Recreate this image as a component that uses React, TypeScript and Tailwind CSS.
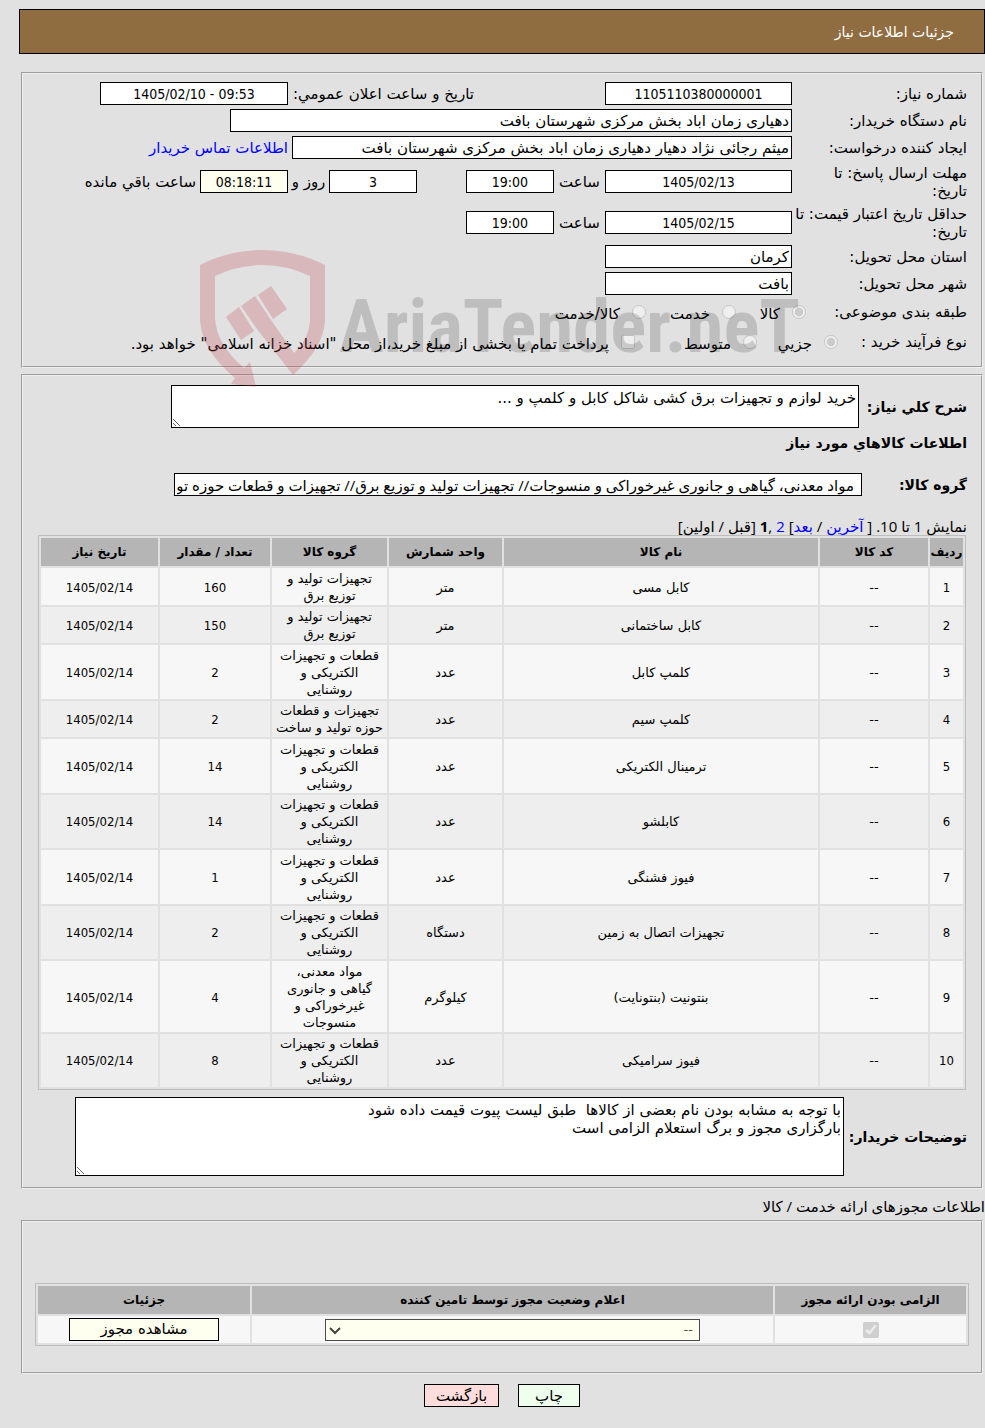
import React from 'react';

const items = [
  { name: 'کابل مسی', unit: 'متر', group: 'تجهیزات تولید و\nتوزیع برق', qty: 160 },
  { name: 'کابل ساختمانی', unit: 'متر', group: 'تجهیزات تولید و\nتوزیع برق', qty: 150 },
  { name: 'کلمپ کابل', unit: 'عدد', group: 'قطعات و تجهیزات\nالکتریکی و\nروشنایی', qty: 2 },
  { name: 'کلمپ سیم', unit: 'عدد', group: 'تجهیزات و قطعات\nحوزه تولید و ساخت', qty: 2 },
  { name: 'ترمینال الکتریکی', unit: 'عدد', group: 'قطعات و تجهیزات\nالکتریکی و\nروشنایی', qty: 14 },
  { name: 'کابلشو', unit: 'عدد', group: 'قطعات و تجهیزات\nالکتریکی و\nروشنایی', qty: 14 },
  { name: 'فیوز فشنگی', unit: 'عدد', group: 'قطعات و تجهیزات\nالکتریکی و\nروشنایی', qty: 1 },
  { name: 'تجهیزات اتصال به زمین', unit: 'دستگاه', group: 'قطعات و تجهیزات\nالکتریکی و\nروشنایی', qty: 2 },
  { name: 'بنتونیت (بنتونایت)', unit: 'کیلوگرم', group: 'مواد معدنی،\nگیاهی و جانوری\nغیرخوراکی و\nمنسوجات', qty: 4 },
  { name: 'فیوز سرامیکی', unit: 'عدد', group: 'قطعات و تجهیزات\nالکتریکی و\nروشنایی', qty: 8 },
];

const panel = 'mx-0.5 min-w-0 border-2 border-[#f0f0f0] [border-style:groove]';
const box = 'h-[23px] shrink-0 border border-black bg-white px-0.5';
const numBox = "h-[23px] shrink-0 border border-black text-center text-[14px] font-['DejaVu_Sans_Condensed','DejaVu_Sans',sans-serif]";
const table = 'w-full table-fixed border-separate border-spacing-0.5 border border-[#bdbdbd] text-center text-[13px] leading-[17px]';

type RowProps = { id: string; label: string; tall?: boolean; children: React.ReactNode };

function Row({ id, label, tall, children }: RowProps) {
  return (
    <div className={tall ? 'flex h-[41px] items-center' : 'flex h-[27px] items-center'}>
      <label htmlFor={id} className="w-[175px] shrink-0 whitespace-pre">{label}</label>
      {children}
    </div>
  );
}

function Watermark() {
  return (
    <div dir="ltr" className="pointer-events-none absolute top-[250px] right-0 left-[19px] flex justify-center pr-1.5">
      <svg width="598" height="138" viewBox="0 0 598 138" className="overflow-visible" aria-hidden="true">
        <g fill="#bf4048" opacity="0.25">
          <path d="M0 15Q30 0 62 0Q95 0 125 15V70Q124 97 93 125L57 79L41 56L55 46L71 70L94 103Q110 88 110 68V26Q87 15 62 15Q38 15 15 26V68Q16 94 44 118L50 112L56 137L31 134L35 128Q2 101 0 70Z" />
          <path d="M26 67L39 57L54 81L41 90ZM58 45L71 36L87 59L73 69Z" />
        </g>
        <text x="139" y="102" fontSize="75" fill="#000" opacity="0.15" className="font-['Liberation_Sans_Narrow','Roboto_Condensed','Liberation_Sans',sans-serif] font-bold">
          AriaTender.neT
        </text>
      </svg>
    </div>
  );
}

export default function App() {
  return (
    <div
      dir="rtl"
      className="relative min-h-screen bg-[#e1e1e1] pt-[9px] pl-[19px] font-['DejaVu_Sans',sans-serif] text-[15px] leading-[18px] text-black"
    >
      <h1 className="flex h-[45px] items-center border border-black bg-[#8f6d40] px-[30px] text-[14px] text-white">جزئیات اطلاعات نیاز</h1>

      {/* General info */}
      <fieldset className={`${panel} mt-[18px] px-3.5 pt-1.5 pb-[9px]`}>
        <Row id="need-no" label="شماره نیاز:">
          <input id="need-no" readOnly className={`${numBox} w-[187px] bg-white`} value="1105110380000001" />
          <label htmlFor="announce" className="ms-[131px] w-[186px] shrink-0">تاریخ و ساعت اعلان عمومي:</label>
          <input id="announce" readOnly dir="ltr" className={`${numBox} w-[188px] bg-white`} value="1405/02/10 - 09:53" />
        </Row>
        <Row id="org" label="نام دستگاه خریدار:">
          <input id="org" readOnly className={`${box} w-[562px]`} value="دهیاری زمان اباد بخش مرکزی شهرستان بافت" />
        </Row>
        <Row id="creator" label="ایجاد کننده درخواست:">
          <input id="creator" readOnly className={`${box} w-[500px]`} value="میثم رجائی نژاد دهیار دهیاری زمان اباد بخش مرکزی شهرستان بافت" />
          <a href="#contact" className="ms-1 text-[#0000ff]">اطلاعات تماس خریدار</a>
        </Row>
        <Row id="deadline" tall label={'مهلت ارسال پاسخ: تا\nتاریخ:'}>
          <input id="deadline" readOnly className={`${numBox} w-[187px] bg-white`} value="1405/02/13" />
          <label htmlFor="deadline-time" className="w-[51px] text-center">ساعت</label>
          <input id="deadline-time" readOnly className={`${numBox} w-[88px] bg-white`} value="19:00" />
          <input id="days" readOnly className={`${numBox} ms-[49px] w-[88px] bg-white`} value="3" />
          <label htmlFor="days" className="w-[41px] text-center">روز و</label>
          <input id="hours" readOnly className={`${numBox} w-[88px] bg-[#fffff0]`} value="08:18:11" />
          <label htmlFor="hours" className="ms-1">ساعت باقي مانده</label>
        </Row>
        <Row id="validity" tall label={'حداقل تاریخ اعتبار قیمت: تا\nتاریخ:'}>
          <input id="validity" readOnly className={`${numBox} w-[187px] bg-white`} value="1405/02/15" />
          <label htmlFor="validity-time" className="w-[51px] text-center">ساعت</label>
          <input id="validity-time" readOnly className={`${numBox} w-[88px] bg-white`} value="19:00" />
        </Row>
        <Row id="province" label="استان محل تحویل:">
          <input id="province" readOnly className={`${box} w-[187px]`} value="کرمان" />
        </Row>
        <Row id="city" label="شهر محل تحویل:">
          <input id="city" readOnly className={`${box} w-[187px]`} value="بافت" />
        </Row>

        <div className="flex h-[30px] items-center">
          <span className="w-[161px]">طبقه بندی موضوعی:</span>
          <label className="flex w-[70px] items-center gap-3">
            <input type="radio" name="kind" disabled defaultChecked className="size-3.5" />
            <span className="pt-1">کالا</span>
          </label>
          <label className="flex w-[90px] items-center gap-3">
            <input type="radio" name="kind" disabled className="size-3.5" />
            <span className="pt-1">خدمت</span>
          </label>
          <label className="flex items-center gap-3">
            <input type="radio" name="kind" disabled className="size-3.5" />
            <span className="pt-1">کالا/خدمت</span>
          </label>
        </div>
        <div className="flex h-[30px] items-center">
          <span className="w-[129px]">نوع فرآیند خرید :</span>
          <label className="flex w-[81px] items-center gap-3">
            <input type="radio" name="process" disabled defaultChecked className="size-3.5" />
            <span className="pt-1">جزیي</span>
          </label>
          <label className="flex w-[122px] items-center gap-3">
            <input type="radio" name="process" disabled className="size-3.5" />
            <span className="pt-1">متوسط</span>
          </label>
          <label className="flex items-center gap-3">
            <input type="checkbox" disabled className="size-3.5" />
            <span className="pt-1">پرداخت تمام یا بخشی از مبلغ خرید،از محل "اسناد خزانه اسلامی" خواهد بود.</span>
          </label>
        </div>
      </fieldset>

      {/* Items */}
      <fieldset className={`${panel} mt-1.5 px-3.5 pt-[9px] pb-[11px]`}>
        <div className="flex items-center">
          <label htmlFor="summary" className="w-[108px] text-[14px] font-bold">شرح کلي نیاز:</label>
          <textarea id="summary" readOnly className="h-[43px] w-[688px] border border-black bg-white px-0.5 py-[3px]" value="خرید لوازم و تجهیزات برق کشی شاکل کابل و کلمپ و ..." />
        </div>
        <h2 className="mt-1.5 text-[14px] font-bold">اطلاعات کالاهاي مورد نیاز</h2>
        <div className="mt-[21px] flex items-center">
          <label htmlFor="group" className="w-[105px] text-[14px] font-bold">گروه کالا:</label>
          <input
            id="group"
            readOnly
            className="h-[23px] w-[688px] border border-black bg-white ps-[7px] pe-0.5 font-['Open_Sans','DejaVu_Sans',sans-serif]"
            value="مواد معدنی، گیاهی و جانوری غیرخوراکی و منسوجات// تجهیزات تولید و توزیع برق// تجهیزات و قطعات حوزه تولید و ساخت"
          />
        </div>
        <p className="mt-[21px] font-['Open_Sans','DejaVu_Sans',sans-serif]">
          نمایش 1 تا 10. [ <a href="#last" className="text-[#0000ff]">آخرین</a> / <a href="#next" className="text-[#0000ff]">بعد</a>]{' '}
          <a href="#page-2" className="text-[#0000ff]">2</a> ,<b>1</b> [قبل / اولین]
        </p>
        <div className="px-px">
          <table className={table}>
            <thead>
              <tr className="h-7 bg-[#b5b5b5] text-[12px]">
                <th className="w-[33px]">ردیف</th>
                <th className="w-[108px]">کد کالا</th>
                <th>نام کالا</th>
                <th className="w-[113px]">واحد شمارش</th>
                <th className="w-[115px]">گروه کالا</th>
                <th className="w-[110px]">تعداد / مقدار</th>
                <th className="w-[117px]">تاریخ نیاز</th>
              </tr>
            </thead>
            <tbody>
              {items.map((item, i) => (
                <tr key={i} className="odd:bg-[#f7f7f7] even:bg-[#eeeeee] odd:[&>td]:pt-0.5 odd:[&>td]:pb-px even:[&>td]:py-px">
                  <td className="font-['DejaVu_Sans_Condensed']">{i + 1}</td>
                  <td>--</td>
                  <td>{item.name}</td>
                  <td>{item.unit}</td>
                  <td className="whitespace-pre">{item.group}</td>
                  <td className="font-['DejaVu_Sans_Condensed']">{item.qty}</td>
                  <td className="font-['DejaVu_Sans_Condensed']">1405/02/14</td>
                </tr>
              ))}
            </tbody>
          </table>
        </div>
        <div className="mt-[7px] flex items-center">
          <label htmlFor="notes" className="w-[123px] text-[14px] font-bold">توضیحات خریدار:</label>
          <textarea
            id="notes"
            readOnly
            className="h-[79px] w-[769px] border border-black bg-white px-0.5 py-[3px]"
            value={'با توجه به مشابه بودن نام بعضی از کالاها  طبق لیست پیوت قیمت داده شود\nبارگزاری مجوز و برگ استعلام الزامی است'}
          />
        </div>
      </fieldset>

      {/* Licences */}
      <h2 className="mt-2 font-['Open_Sans','DejaVu_Sans',sans-serif]">اطلاعات مجوزهای ارائه خدمت / کالا</h2>
      <fieldset className={`${panel} mt-[5px] px-3 pt-[61px] pb-[26px]`}>
        <table className={table}>
          <thead>
            <tr className="h-7 bg-[#b5b5b5] text-[12px]">
              <th className="w-[191px]">الزامی بودن ارائه مجوز</th>
              <th>اعلام وضعیت مجوز توسط تامین کننده</th>
              <th className="w-[212px]">جزئیات</th>
            </tr>
          </thead>
          <tbody>
            <tr className="bg-[#f7f7f7]">
              <td>
                <input type="checkbox" aria-label="الزامی بودن ارائه مجوز" disabled defaultChecked className="size-4 align-middle" />
              </td>
              <td className="p-0.5">
                <span className="relative inline-block w-[375px] align-middle">
                  <select aria-label="اعلام وضعیت مجوز" disabled className="h-[22px] w-full appearance-none border border-[#4c4c4c] bg-[#fffff0] px-1.5 text-[#4c4c4c]">
                    <option>--</option>
                  </select>
                  <svg className="absolute top-2 left-1 h-2 w-3" viewBox="0 0 12 8" fill="none" stroke="#444" strokeWidth="2" aria-hidden="true">
                    <path d="M1 1L6 6L11 1" />
                  </svg>
                </span>
              </td>
              <td className="py-0.5">
                <button className="h-[23px] w-[150px] border border-black bg-[#fffff0] align-middle text-[15px]">مشاهده مجوز</button>
              </td>
            </tr>
          </tbody>
        </table>
      </fieldset>

      <div className="mt-2.5 flex justify-center gap-[19px] pb-5">
        <button className="h-[23px] w-[62px] border border-black bg-[#eeffee]">چاپ</button>
        <button className="h-[23px] w-[75px] border border-black bg-[#ffdddd]">بازگشت</button>
      </div>

      <Watermark />
    </div>
  );
}
